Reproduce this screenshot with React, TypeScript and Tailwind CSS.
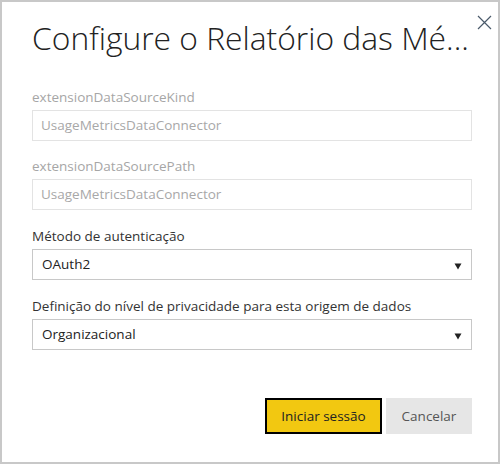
import React from "react";

const font = { fontFamily: '"Open Sans", "Noto Sans", sans-serif' };

function Arrow() {
  return (
    <svg width="8" height="7" viewBox="0 0 8 7" className="absolute right-[9px] top-[13px]">
      <path d="M0.5 0.5 H7.5 L4 6.5 Z" fill="#222" />
    </svg>
  );
}

export default function App() {
  return (
    <div
      className="w-[500px] h-[464px] bg-white border-2 border-[#c8c8c8] relative flex flex-col pl-[30px] pr-[26px]"
      style={font}
    >
      <button className="absolute right-[6px] top-[12px] w-[16px] h-[16px] flex items-center justify-center">
        <svg width="15" height="15" viewBox="0 0 15 15">
          <path d="M1 1 L14 14 M14 1 L1 14" stroke="#4a5a6a" strokeWidth="1.2" />
        </svg>
      </button>
      <h1 className="mt-[16px] text-[31.8px] leading-[40px] font-light text-[#222] whitespace-nowrap">
        Configure o Relatório das Mé...
      </h1>

      <div className="mt-[30px] text-[13.5px] leading-[18px] text-[#a6a6a6]">extensionDataSourceKind</div>
      <div className="mt-[4px] h-[31px] border border-[#e3e3e3] flex items-center pl-[8px] text-[13.5px] text-[#a8a8a8]">
        UsageMetricsDataConnector
      </div>

      <div className="mt-[16px] text-[13.5px] leading-[18px] text-[#a6a6a6]">extensionDataSourcePath</div>
      <div className="mt-[4px] h-[31px] border border-[#e3e3e3] flex items-center pl-[8px] text-[13.5px] text-[#a8a8a8]">
        UsageMetricsDataConnector
      </div>

      <div className="mt-[17px] text-[13.5px] leading-[18px] text-[#333]">Método de autenticação</div>
      <div className="relative mt-[4px] h-[31px] border border-[#c8c8c8] flex items-center pl-[9px] text-[13.5px] text-[#222]">
        OAuth2
        <Arrow />
      </div>

      <div className="mt-[17px] text-[13.5px] leading-[18px] text-[#333]">
        Definição do nível de privacidade para esta origem de dados
      </div>
      <div className="relative mt-[4px] h-[31px] border border-[#c8c8c8] flex items-center pl-[9px] text-[13.5px] text-[#222]">
        Organizacional
        <Arrow />
      </div>

      <div className="mt-[48px] flex justify-end gap-[4px]">
        <button className="w-[117px] h-[36px] bg-[#f2c811] border-2 border-black text-[13.5px] text-[#222]">
          Iniciar sessão
        </button>
        <button className="w-[86px] h-[36px] bg-[#e6e6e6] text-[13.5px] text-[#555]">Cancelar</button>
      </div>
    </div>
  );
}
